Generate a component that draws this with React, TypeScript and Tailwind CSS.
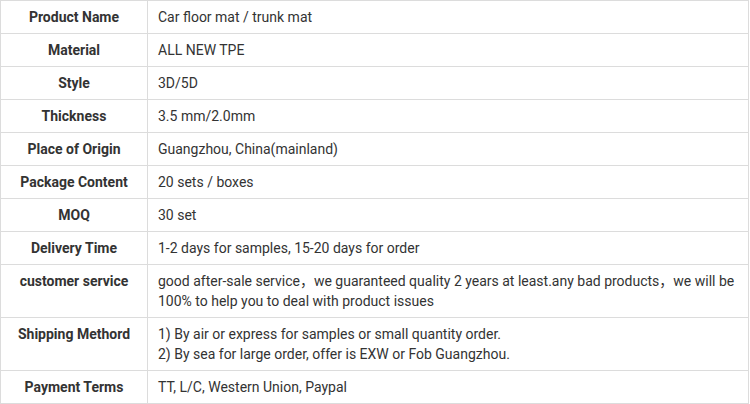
import React from 'react';

const rows: { label: string; value: React.ReactNode }[] = [
    { label: 'Product Name', value: 'Car floor mat / trunk mat' },
    { label: 'Material', value: 'ALL NEW TPE' },
    { label: 'Style', value: '3D/5D' },
    { label: 'Thickness', value: '3.5 mm/2.0mm' },
    { label: 'Place of Origin', value: 'Guangzhou, China(mainland)' },
    { label: 'Package Content', value: '20 sets / boxes' },
    { label: 'MOQ', value: '30 set' },
    { label: 'Delivery Time', value: '1-2 days for samples, 15-20 days for order' },
    {
        label: 'customer service',
        value: (
            <>
                <span className="whitespace-nowrap">
                    good after-sale service，we guaranteed quality 2 years at least.any bad products，we will be
                </span>
                <br />
                100% to help you to deal with product issues
            </>
        ),
    },
    {
        label: 'Shipping Methord',
        value: (
            <>
                1) By air or express for samples or small quantity order.
                <br />
                2) By sea for large order, offer is EXW or Fob Guangzhou.
            </>
        ),
    },
    { label: 'Payment Terms', value: 'TT, L/C, Western Union, Paypal' },
];

export default function App() {
    return (
        <div className="w-[750px] h-[404px] bg-white overflow-hidden font-['Roboto','Noto_Sans_CJK_SC',sans-serif] text-[14px] leading-[20px] text-[#333]">
            <table className="w-[749px] table-fixed border-collapse border border-[#dcdcdc]">
                <tbody>
                    {rows.map((row) => (
                        <tr key={row.label}>
                            {/* label column */}
                            <td className="w-[147px] border border-[#dcdcdc] py-[6px] px-1 align-top text-center font-bold text-[#333]">
                                {row.label}
                            </td>
                            <td className="border border-[#dcdcdc] py-[6px] pl-[10px] pr-2 align-top">
                                {row.value}
                            </td>
                        </tr>
                    ))}
                </tbody>
            </table>
        </div>
    );
}
